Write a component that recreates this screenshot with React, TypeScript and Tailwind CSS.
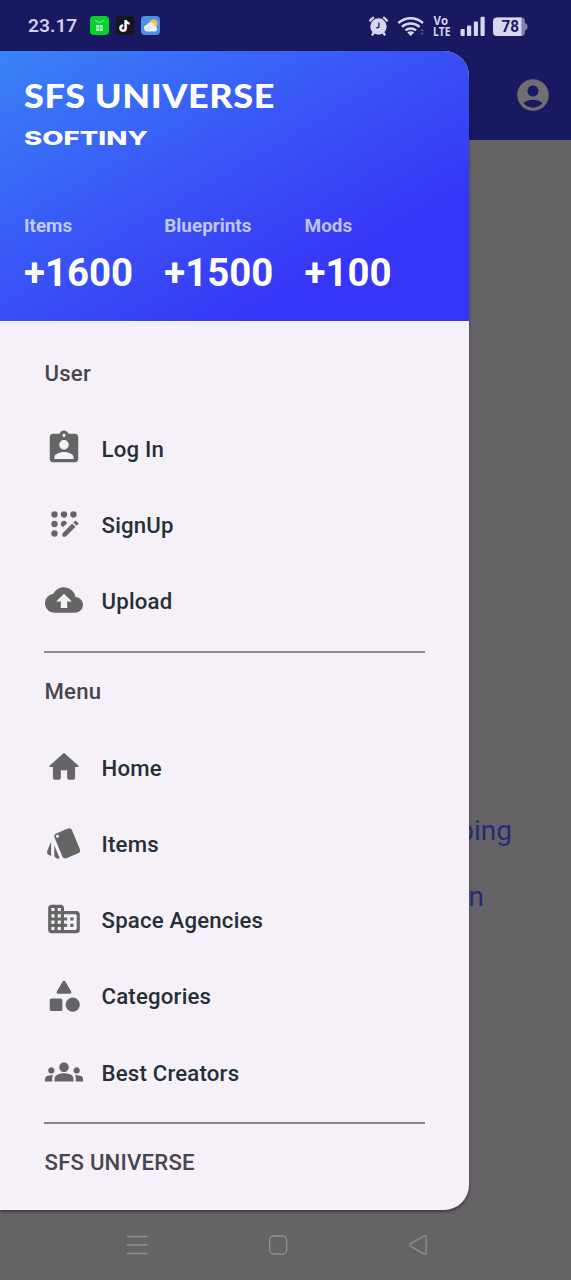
import type { ReactNode } from "react";
import { MdAccountCircle, MdAssignmentInd, MdCloudUpload, MdGroups } from "react-icons/md";

const HomeIcon = () => (
  <svg viewBox="0 0 24 24" fill="currentColor" className="size-[38px]">
    <path d="M10 19v-5h4v5c0 .55.45 1 1 1h3c.55 0 1-.45 1-1v-7h1.7c.46 0 .68-.57.33-.87L12.67 3.6c-.38-.34-.96-.34-1.34 0l-8.36 7.53c-.34.3-.13.87.33.87H5v7c0 .55.45 1 1 1h3c.55 0 1-.45 1-1z" />
  </svg>
);

const RegistrationIcon = () => (
  <svg viewBox="0 0 24 24" fill="currentColor" className="size-[38px]">
    <circle cx="6" cy="6" r="2" />
    <circle cx="12" cy="6" r="2" />
    <circle cx="18" cy="6" r="2" />
    <circle cx="6" cy="12" r="2" />
    <circle cx="6" cy="18" r="2" />
    <path d="M11.500 13.940A2 2 0 1 1 13.940 11.500z" />
    <path d="M20.900 11.300l-1.200-1.200a.6.6 0 0 0-.85 0l-.95.95 2.050 2.050.95-.95c.23-.23.23-.62 0-.85zM11 17.950v1.550c0 .28.22.5.5.5h1.550l6.200-6.200-2.050-2.050z" />
  </svg>
);

const StyleIcon = () => (
  <svg viewBox="0 0 24 24" fill="currentColor" className="size-[38px]">
    <path d="M2.53 19.65l1.34.56v-9.03l-2.43 5.86c-.41 1.02.08 2.19 1.09 2.61zm19.5-3.7L17.07 3.98c-.31-.75-1.04-1.21-1.81-1.23-.26 0-.53.04-.79.15L7.1 5.95c-.75.31-1.21 1.03-1.23 1.8-.01.27.04.54.15.8l4.96 11.97c.31.76 1.05 1.22 1.83 1.23.26 0 .52-.05.77-.15l7.36-3.05c1.02-.42 1.51-1.59 1.09-2.6zM7.88 8.75c-.55 0-1-.45-1-1s.45-1 1-1 1 .45 1 1-.45 1-1 1zm-2 11c0 1.1.9 2 2 2h1.45l-3.45-8.34v6.34z" />
  </svg>
);

const BuildingIcon = () => (
  <svg viewBox="0 0 24 24" fill="currentColor" className="size-[38px]">
    <path d="M12 7V5c0-1.1-.9-2-2-2H4c-1.1 0-2 .9-2 2v14c0 1.1.9 2 2 2h16c1.1 0 2-.9 2-2V9c0-1.1-.9-2-2-2h-8zM6 19H4v-2h2v2zm0-4H4v-2h2v2zm0-4H4V9h2v2zm0-4H4V5h2v2zm4 12H8v-2h2v2zm0-4H8v-2h2v2zm0-4H8V9h2v2zm0-4H8V5h2v2zm9 12h-7v-2h2v-2h-2v-2h2v-2h-2V9h7c.55 0 1 .45 1 1v8c0 .55-.45 1-1 1zm-1-8h-2v2h2v-2zm0 4h-2v2h2v-2z" />
  </svg>
);

const ShapesIcon = () => (
  <svg viewBox="0 0 24 24" fill="currentColor" className="size-[38px]">
    <path d="M11.15 2.9 7.43 9.2c-.41.66.07 1.3.85 1.3h7.43c.78 0 1.26-.64.85-1.3L12.85 2.9c-.39-.64-1.31-.64-1.7 0z" />
    <circle cx="17.5" cy="17.5" r="4.5" />
    <rect x="3" y="13.5" width="8" height="8" rx="1" />
  </svg>
);

const iconClass = "size-[38px]";

function Row({ icon, label }: { icon: ReactNode; label: string }) {
  return (
    <li className="flex h-[76.2px] items-center gap-[19px] text-[#252f38]">
      <span className="-mt-[3px] text-[#656565]">{icon}</span>
      <span>{label}</span>
    </li>
  );
}

function Stat({ label, value }: { label: string; value: string }) {
  return (
    <div className="w-[140.3px]">
      <div className="text-[18.9px] leading-[24px] font-bold text-white/70">{label}</div>
      <div className="mt-[12px] text-[38.4px] leading-[46px] font-bold">{value}</div>
    </div>
  );
}

function StatusBar() {
  return (
    <div className="flex h-[51px] items-center text-[#cfcfe8]">
      <span className="ml-[28px] w-[51px] text-[19.2px] leading-[51px] font-semibold">23.17</span>
      <svg viewBox="0 0 70 19" className="ml-[11px] h-[19px] w-[70px]">
        <rect width="19" height="19" rx="4" fill="#05d32d" />
        <path d="M5.5 4c1 3 7 3 8 0" fill="none" stroke="#8df79d" strokeWidth="1" />
        <g fill="#b8f9bf">
          <rect x="6" y="9" width="3.300" height="2.800" rx=".7" />
          <rect x="9.700" y="9" width="3.300" height="2.800" rx=".7" />
          <rect x="6" y="12.200" width="3.300" height="2.800" rx=".7" />
          <rect x="9.700" y="12.200" width="3.300" height="2.800" rx=".7" />
        </g>
        <rect x="25.500" width="19" height="19" rx="4" fill="#15151c" />
        <g fill="none" strokeWidth="2">
          <path d="M35.2 4v7.8a2.600 2.600 0 1 1-2.600-2.600M35.200 4c.3 2 1.700 3.200 3.800 3.300" stroke="#35d5dc" />
          <path d="M36.200 4.600v7.800a2.600 2.600 0 1 1-2.600-2.600M36.200 4.600c.3 2 1.700 3.200 3.800 3.300" stroke="#e83b5a" />
          <path d="M35.700 4.200v7.900a2.600 2.600 0 1 1-2.600-2.600M35.700 4.200c.3 2 1.700 3.200 3.800 3.300" stroke="#fff" />
        </g>
        <rect x="51" width="19" height="19" rx="4" fill="#4f8fe8" />
        <circle cx="63.500" cy="7.500" r="4" fill="#f2c34a" />
        <path d="M57 15.500a3.400 3.400 0 0 1-.3-6.700 4.300 4.300 0 0 1 8 1.200 2.800 2.800 0 0 1 .3 5.500z" fill="#e6eefa" />
      </svg>
      <svg viewBox="0 0 162 24" className="ml-[207px] h-[24px] w-[162px] shrink-0" fill="#d6d6ef">
        <circle cx="11.500" cy="12.500" r="8.200" />
        <path d="M11.900 8.500v4.500l-2.600 1.200" fill="none" stroke="#191961" strokeWidth="1.300" />
        <path d="M2.700 7.300A11 11 0 0 1 6.900 3.200M16.200 3.200A11 11 0 0 1 20.400 7.300M6.700 18.500l-1.700 3M16.300 18.500l1.700 3" fill="none" stroke="#d6d6ef" strokeWidth="2.400" />
        <g fill="none" stroke="#d6d6ef" strokeWidth="2.500">
          <path d="M31.400 9a18 18 0 0 1 24.600 0M34.900 12.900a13 13 0 0 1 17.600 0M38.400 16.400a8 8 0 0 1 10.600 0" />
        </g>
        <path d="M40.200 18.500q3.500-2.600 7 0L43.700 22z" />
        <path d="M53 17l2-2.500 2 2.500zM53 18.800h4l-2 2.500z" fill="#4a4a85" />
        <text x="66.500" y="10.800" fontFamily="Open Sans, sans-serif" fontWeight="700" fontSize="12" textLength="14.500" lengthAdjust="spacingAndGlyphs">Vo</text>
        <text x="66" y="21.600" fontFamily="Open Sans, sans-serif" fontWeight="700" fontSize="12" textLength="17.500" lengthAdjust="spacingAndGlyphs">LTE</text>
        <rect x="93.500" y="15" width="4.200" height="7" rx="1" />
        <rect x="100" y="11.500" width="4.200" height="10.500" rx="1" />
        <rect x="106.800" y="7.500" width="4.200" height="14.500" rx="1" />
        <rect x="113.500" y="2.700" width="4.200" height="19.300" rx="1" />
        <path d="M130 3.500h24a4 4 0 0 1 4 4v1.500q2.500.5 2.500 3.700t-2.500 3.800v1.500a4 4 0 0 1-4 4h-24z" fill="#8080ae" />
        <path d="M130 3.500h24.500v18.500H130a4 4 0 0 1-4-4v-10.500a4 4 0 0 1 4-4z" />
        <text x="134.500" y="18.400" fill="#191961" fontFamily="Roboto, sans-serif" fontWeight="700" fontSize="16.500" textLength="17.500" lengthAdjust="spacingAndGlyphs">78</text>
      </svg>
    </div>
  );
}

export default function App() {
  return (
    <div className="relative flex h-[1280px] w-[571px] flex-col overflow-hidden bg-[#666366] font-['Roboto',sans-serif]">
      <header className="h-[140px] bg-[#191961]">
        <StatusBar />
        <div className="flex h-[88px] items-center justify-end pr-[19px] text-[#706e70]">
          <MdAccountCircle className="size-[38px]" />
        </div>
      </header>
      <main className="flex-1 pt-[658px] text-[28px] leading-[66px] text-[#272b75]">
        <p className="w-[512px] text-right">ping</p>
        <p className="w-[484px] text-right">n</p>
      </main>
      <nav className="flex h-[70px] items-center pl-[127px]">
        <svg viewBox="0 0 304 24" className="h-[24px] w-[304px]" fill="none" stroke="#929092" strokeWidth="1.300">
          <path d="M0 3.500h20.500M0 12h20.500M0 20.500h20.500" />
          <rect x="142.700" y="3" width="17" height="18" rx="4" />
          <path d="M283.300 10.900 297 3.200q2.200-1 2.200 1v15.600q0 2-2.200 1l-13.700-7.700q-1.400-1.100 0-2.200z" />
        </svg>
      </nav>

      <aside className="absolute top-[51px] left-0 flex h-[1159px] w-[469.4px] flex-col overflow-hidden rounded-r-[25px] bg-[#f6f1f9] shadow-[0_2px_3px_rgba(0,0,0,0.4)]">
        <div className="h-[270px] shrink-0 bg-[linear-gradient(150deg,#3983f7_0%,#395af7_38%,#3836f6_76%,#3836f6_100%)] pl-[24px] text-white">
          <h1 className="pt-[24px] font-['Lato',sans-serif] text-[32.5px] leading-[42px] font-black whitespace-nowrap">
            <span className="inline-block origin-left scale-x-[1.11] tracking-[0.5px]">SFS UNIVERSE</span>
          </h1>
          <div className="mt-[9px] h-[24px] font-['Inter',sans-serif] text-[19.3px] leading-[24px] font-extrabold">
            <span className="inline-block origin-left scale-x-[1.43]">SOFTINY</span>
          </div>
          <div className="mt-[64px] flex">
            <Stat label="Items" value="+1600" />
            <Stat label="Blueprints" value="+1500" />
            <Stat label="Mods" value="+100" />
          </div>
        </div>
        <div className="px-[44.5px] pt-[14px] text-[22.2px] font-medium tracking-[0.2px] text-[#49454f]">
          <h2 className="flex h-[77px] items-center">User</h2>
          <ul className="-mt-[0.8px]">
            <Row icon={<MdAssignmentInd className={iconClass} />} label="Log In" />
            <Row icon={<RegistrationIcon />} label="SignUp" />
            <Row icon={<MdCloudUpload className={iconClass} />} label="Upload" />
          </ul>
          <div className="mt-[11.2px] -ml-[0.5px] h-[2px] w-[381px] bg-[#8f8a94]" />
          <h2 className="flex h-[78px] items-center">Menu</h2>
          <ul className="-mt-[0.5px]">
            <Row icon={<HomeIcon />} label="Home" />
            <Row icon={<StyleIcon />} label="Items" />
            <Row icon={<BuildingIcon />} label="Space Agencies" />
            <Row icon={<ShapesIcon />} label="Categories" />
            <Row icon={<MdGroups className={iconClass} />} label="Best Creators" />
          </ul>
          <div className="mt-[11px] -ml-[0.5px] h-[2px] w-[381px] bg-[#88838d]" />
          <h2 className="flex h-[77px] items-center">SFS UNIVERSE</h2>
        </div>
      </aside>
    </div>
  );
}
